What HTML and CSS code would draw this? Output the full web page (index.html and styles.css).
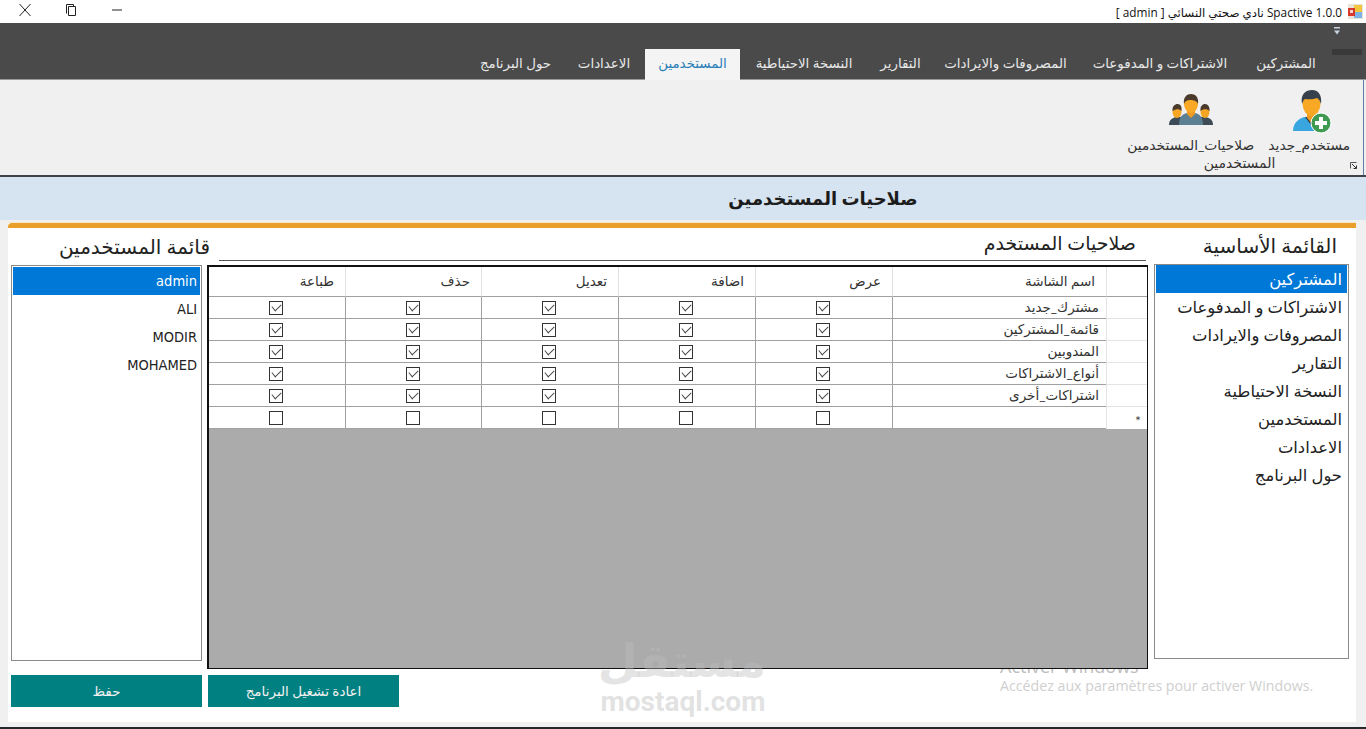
FILE: index.html
```html
<!DOCTYPE html>
<html lang="ar" dir="rtl">
<head>
<meta charset="utf-8">
<title>Spactive 1.0.0</title>
<link rel="stylesheet" href="styles.css">
</head>
<body>
<div class="app">
  <header class="titlebar">
    <div class="title-group">
      <svg class="app-icon" width="15" height="15" viewBox="0 0 15 15"><rect x="0" y="0" width="15" height="15" fill="#e8e4d8"/><rect x="6" y="1" width="8" height="7" fill="#f2c63c"/><rect x="6" y="8" width="8" height="6" fill="#7fb2e5"/><rect x="0" y="4" width="7" height="8" fill="#d8382c"/><rect x="2" y="6" width="3" height="3" fill="#f6d5cf"/></svg>
      <span class="title-text">Spactive 1.0.0 نادي صحتي النسائي [ admin ]</span>
    </div>
    <div class="win-controls" dir="ltr">
      <span class="win-btn"><svg width="14" height="14" viewBox="0 0 14 14"><path d="M1.5 1 L12.5 13 M12.5 1 L1.5 13" stroke="#222" stroke-width="1" fill="none"/></svg></span>
      <span class="win-btn"><svg width="10" height="12" viewBox="0 0 10 12"><path d="M2.5 2.5H9.5V11.5H2.5Z M0.5 9.5V0.5H7.5V2.5" stroke="#222" stroke-width="1" fill="none"/></svg></span>
      <span class="win-btn"><svg width="10" height="2" viewBox="0 0 10 2"><path d="M0 1H10" stroke="#222" stroke-width="1"/></svg></span>
    </div>
  </header>

  <nav class="tabbar">
    <span class="qat-arrow"><svg width="6" height="8" viewBox="0 0 6 8"><path d="M0 0H6V1.5H0Z M0 3.5H6L3 7.5Z" fill="#c9d3e0"/></svg></span>
    <span class="qat-block"></span>
    <div class="tabs">
      <span class="tab">المشتركين</span>
      <span class="tab">الاشتراكات و المدفوعات</span>
      <span class="tab">المصروفات والايرادات</span>
      <span class="tab">التقارير</span>
      <span class="tab">النسخة الاحتياطية</span>
      <span class="tab tab-active">المستخدمين</span>
      <span class="tab">الاعدادات</span>
      <span class="tab">حول البرنامج</span>
    </div>
  </nav>

  <section class="ribbon">
    <div class="ribbon-group">
      <div class="ribbon-items">
        <div class="ribbon-item item-new">
          <svg class="ribbon-icon" width="42" height="44" viewBox="0 0 42 44">
            <path d="M1 41 C1 33 7 28 13 27 L26 27 C30 28 33 32 34 41 Z" fill="#3aa6e0"/>
            <path d="M13 27 L19 35 L26 27 Z" fill="#2a3f4f"/>
            <path d="M15 20 H24 V28 L19.500 33 L15 28 Z" fill="#ef9a22"/>
            <ellipse cx="19.500" cy="14" rx="9" ry="11.500" fill="#f9a825"/>
            <path d="M10 14 C8 4 14 0 20 0 C27 0 30 6 29 14 C28 11 27 9 25 8 C20 10 15 9 13 9 C11 10 11 12 10 14 Z" fill="#37414b"/>
            <circle cx="29" cy="33" r="10" fill="#3f9a52" stroke="#fff" stroke-width="1"/>
            <path d="M27 27 H31 V31 H35 V35 H31 V39 H27 V35 H23 V31 H27 Z" fill="#fff"/>
          </svg>
          <span class="ribbon-label">مستخدم_جديد</span>
        </div>
        <div class="ribbon-item item-perm">
          <svg class="ribbon-icon" width="44" height="32" viewBox="0 0 44 32">
            <path d="M0 31 C0 26 3 24 7 23 L14 23 L16 31 Z" fill="#3d4c57"/>
            <path d="M44 31 C44 26 41 24 37 23 L30 23 L28 31 Z" fill="#3d4c57"/>
            <ellipse cx="8" cy="18" rx="4.500" ry="6" fill="#f5a623"/>
            <path d="M3.500 17 C3 12 6 10 8.500 10 C12 10 13 13 12.500 17 C10 14.500 7 15 3.500 17 Z" fill="#4a3a2c"/>
            <ellipse cx="36" cy="18" rx="4.500" ry="6" fill="#f5a623"/>
            <path d="M31.500 17 C31 12 33.500 10 36 10 C39 10 41 13 40.500 17 C38 14.500 34 15 31.500 17 Z" fill="#4a3a2c"/>
            <path d="M10 31 C10 23 13 20 18 19 H26 C31 20 34 23 34 31 Z" fill="#5d7f92"/>
            <path d="M18 15 H26 V20 L22 24 L18 20 Z" fill="#ef9a22"/>
            <ellipse cx="22" cy="10" rx="7" ry="9" fill="#f9a825"/>
            <path d="M15 10 C14 3 18 0 22 0 C27 0 30 4 29 10 C28 7 25 6 21 6 C18 6 16 7 15 10 Z" fill="#4a3a2c"/>
          </svg>
          <span class="ribbon-label">صلاحيات_المستخدمين</span>
        </div>
      </div>
      <div class="ribbon-group-name">المستخدمين</div>
      <span class="launcher"><svg width="7" height="7" viewBox="0 0 7 7"><path d="M0.5 6.5V0.5H6.5" stroke="#555" fill="none"/><path d="M2 2L6.5 6.5M6.5 3.5V6.5H3.5" stroke="#333" fill="none"/></svg></span>
    </div>
  </section>

  <div class="page-heading">صلاحيات المستخدمين</div>

  <div class="content">
    <main class="card">
      <div class="card-grid">
        <h2 class="col-title title-main">القائمة الأساسية</h2>
        <h2 class="col-title title-perm">صلاحيات المستخدم</h2>
        <h2 class="col-title title-users">قائمة المستخدمين</h2>

        <ul class="listbox list-main">
          <li class="selected">المشتركين</li>
          <li>الاشتراكات و المدفوعات</li>
          <li>المصروفات والايرادات</li>
          <li>التقارير</li>
          <li>النسخة الاحتياطية</li>
          <li>المستخدمين</li>
          <li>الاعدادات</li>
          <li>حول البرنامج</li>
        </ul>

        <div class="datagrid">
          <div class="dg-row dg-head">
            <div class="dg-rowhead"></div>
            <div class="dg-name">اسم الشاشة</div>
            <div class="dg-h">عرض</div>
            <div class="dg-h">اضافة</div>
            <div class="dg-h">تعديل</div>
            <div class="dg-h">حذف</div>
            <div class="dg-h dg-last">طباعة</div>
          </div>
          <div class="dg-row">
            <div class="dg-rowhead"></div><div class="dg-name">مشترك_جديد</div>
            <div class="dg-c"><i class="cb on"></i></div><div class="dg-c"><i class="cb on"></i></div><div class="dg-c"><i class="cb on"></i></div><div class="dg-c"><i class="cb on"></i></div><div class="dg-c dg-last"><i class="cb on"></i></div>
          </div>
          <div class="dg-row">
            <div class="dg-rowhead"></div><div class="dg-name">قائمة_المشتركين</div>
            <div class="dg-c"><i class="cb on"></i></div><div class="dg-c"><i class="cb on"></i></div><div class="dg-c"><i class="cb on"></i></div><div class="dg-c"><i class="cb on"></i></div><div class="dg-c dg-last"><i class="cb on"></i></div>
          </div>
          <div class="dg-row">
            <div class="dg-rowhead"></div><div class="dg-name">المندوبين</div>
            <div class="dg-c"><i class="cb on"></i></div><div class="dg-c"><i class="cb on"></i></div><div class="dg-c"><i class="cb on"></i></div><div class="dg-c"><i class="cb on"></i></div><div class="dg-c dg-last"><i class="cb on"></i></div>
          </div>
          <div class="dg-row">
            <div class="dg-rowhead"></div><div class="dg-name">أنواع_الاشتراكات</div>
            <div class="dg-c"><i class="cb on"></i></div><div class="dg-c"><i class="cb on"></i></div><div class="dg-c"><i class="cb on"></i></div><div class="dg-c"><i class="cb on"></i></div><div class="dg-c dg-last"><i class="cb on"></i></div>
          </div>
          <div class="dg-row">
            <div class="dg-rowhead"></div><div class="dg-name">اشتراكات_أخرى</div>
            <div class="dg-c"><i class="cb on"></i></div><div class="dg-c"><i class="cb on"></i></div><div class="dg-c"><i class="cb on"></i></div><div class="dg-c"><i class="cb on"></i></div><div class="dg-c dg-last"><i class="cb on"></i></div>
          </div>
          <div class="dg-row">
            <div class="dg-rowhead dg-star">*</div><div class="dg-name"></div>
            <div class="dg-c"><i class="cb"></i></div><div class="dg-c"><i class="cb"></i></div><div class="dg-c"><i class="cb"></i></div><div class="dg-c"><i class="cb"></i></div><div class="dg-c dg-last"><i class="cb"></i></div>
          </div>
        </div>

        <ul class="listbox list-users">
          <li class="selected">admin</li>
          <li>ALI</li>
          <li>MODIR</li>
          <li>MOHAMED</li>
        </ul>

        <div class="btn-slot slot-restart"><button class="btn">اعادة تشغيل البرنامج</button></div>
        <div class="btn-slot slot-save"><button class="btn">حفظ</button></div>
      </div>
    </main>
  </div>
  <div class="bottom-line"></div>
</div>

<div class="activate" dir="ltr">
  <div class="activate-title">Activer Windows</div>
  <div class="activate-text">Accédez aux paramètres pour activer Windows.</div>
</div>
<div class="watermark">
  <div class="wm-ar">مستقل</div>
  <div class="wm-en" dir="ltr">mostaql.com</div>
</div>
</body>
</html>
```
FILE: styles.css
```css
* { box-sizing: border-box; }
html, body { margin: 0; padding: 0; }
body {
  width: 1366px;
  height: 729px;
  overflow: hidden;
  position: relative;
  background: #f0f0f0;
  font-family: Lato, "DejaVu Sans", sans-serif;
  color: #222;
}
.app { display: flex; flex-direction: column; height: 729px; }

/* title bar */
.titlebar {
  height: 23px;
  flex: none;
  background: #fff;
  display: flex;
  justify-content: space-between;
  align-items: center;
  padding-right: 3px;
}
.title-group { display: flex; align-items: center; gap: 6px; }
.title-text { font: 11.800px "Open Sans", "DejaVu Sans", sans-serif; color: #111; }
.win-controls { display: flex; padding-left: 2px; margin-top: -3px; }
.win-btn { width: 46px; display: flex; justify-content: center; align-items: center; height: 14px; }

/* tabs */
.tabbar {
  height: 57px;
  flex: none;
  background: #4a4a4a;
  border-bottom: 1px solid #9a9a9a;
  position: relative;
  display: flex;
  align-items: flex-end;
  padding-right: 36px;
}
.qat-arrow { position: absolute; top: 4px; left: 1334px; line-height: 0; }
.qat-block { position: absolute; top: 26px; left: 1332px; width: 30px; height: 6px; background: #393939; }
.tabs {
  display: grid;
  grid-template-columns: 88px 164px 145px 65px 128px 95px 82px 95px;
  height: 31px;
  margin-bottom: -1px;
}
.tab {
  display: flex;
  align-items: center;
  justify-content: center;
  font-size: 13.400px;
  color: #e8e8e8;
  white-space: nowrap;
  padding-bottom: 4px;
}
.tab-active { background: #f4f4f4; color: #2a7fb8; }

/* ribbon */
.ribbon {
  height: 97px;
  flex: none;
  background: #f0f0f0;
  padding-right: 2px;
  border-bottom: 2px solid #3f4347;
  display: flex;
}
.ribbon-group {
  width: 242px;
  position: relative;
  border-right: 1px solid #5f7fa0;
  display: flex;
  flex-direction: column;
}
.ribbon-items { display: flex; height: 75px; }
.ribbon-item { display: flex; flex-direction: column; align-items: center; position: relative; }
.item-new { width: 108px; padding-top: 10px; margin-left: -4px; }
.item-new .ribbon-icon { margin-right: -8px; }
.item-perm { width: 138px; padding-top: 14px; }
.ribbon-icon { display: block; flex: none; }
.ribbon-label { font-size: 13.800px; line-height: 18px; color: #333; white-space: nowrap; position: absolute; top: 56px; }
.ribbon-group-name { font-size: 14px; line-height: 16px; color: #333; text-align: center; padding-right: 6px; }
.launcher { position: absolute; left: 228px; top: 82px; line-height: 0; }

/* heading */
.page-heading {
  height: 43px;
  flex: none;
  background: #d6e4f1;
  font-size: 18px;
  font-weight: 700;
  color: #1c1c1c;
  display: flex;
  align-items: center;
  justify-content: center;
  padding-left: 280px;
  padding-bottom: 2px;
}

/* card */
.content { flex: 1; padding: 2px 10px 5px 8px; min-height: 0; display: flex; }
.card {
  flex: 1;
  background: #fff;
  border-top: 1px solid #f6e7c6;
  display: flex;
  flex-direction: column;
}
.card::before {
  content: "";
  display: block;
  height: 5px;
  background: #e99f2a;
  border-top-left-radius: 4px;
  flex: none;
}
.card-grid {
  display: grid;
  grid-template-columns: 196px 941px 191px;
  column-gap: 5px;
  grid-template-rows: 37px 404px 38px;
  padding-right: 7px;
  padding-left: 3px;
}
.col-title {
  margin: 0;
  font-size: 20px;
  line-height: 26px;
  font-weight: 400;
  color: #222;
  white-space: nowrap;
}
.title-main { grid-column: 1; grid-row: 1; padding-right: 12px; padding-top: 4px; }
.title-perm {
  grid-column: 2;
  grid-row: 1;
  font-size: 19px;
  height: 33px;
  border-bottom: 1px solid #555;
  margin-left: 12px;
  margin-right: 2px;
  padding-right: 10px;
  padding-top: 2px;
}
.title-users { grid-column: 3; grid-row: 1; margin-right: -8px; padding-top: 5px; }

/* list boxes */
.listbox {
  list-style: none;
  margin: 0;
  padding: 1px;
  background: #fff;
  border: 1px solid #8a8a8a;
  font-size: 16.400px;
  color: #222;
}
.listbox li { height: 28px; line-height: 28px; padding-right: 3px; white-space: nowrap; }
.listbox .selected { background: #0078d7; color: #fff; }
.list-main { grid-column: 1; grid-row: 2; width: 195px; height: 395px; margin-top: -1px; padding-top: 0; }
.list-main li { padding-right: 5px; }
.list-users {
  grid-column: 3;
  grid-row: 2;
  height: 396px;
  font-family: "DejaVu Sans", sans-serif;
  font-stretch: condensed;
  font-size: 14.500px;
}

/* data grid */
.datagrid {
  grid-column: 2;
  grid-row: 2;
  height: 404px;
  background: #ababab;
  border: solid #111;
  border-width: 2px 1px 1px 2px;
  font-size: 13.500px;
  color: #333;
}
.dg-row {
  display: grid;
  grid-template-columns: 41px 214px 137px 137px 137px 136px 136px;
  height: 22px;
  background: #fff;
}
.dg-head { height: 30px; }
.dg-row > div {
  border-left: 1px solid #a0a0a0;
  border-bottom: 1px solid #a0a0a0;
}
.dg-row > .dg-last { border-left: 0; }
.dg-row > .dg-rowhead { border-left: 1px solid #e4e4e4; border-bottom: 1px solid #e4e4e4; }
.dg-head > div { border-left-color: #e2e2e2; }
.dg-head > .dg-rowhead { border-bottom-color: #a0a0a0; }
.dg-name { padding-right: 7px; line-height: 21px; white-space: nowrap; overflow: hidden; }
.dg-head .dg-name, .dg-h { padding-right: 11px; line-height: 29px; }
.dg-row > .dg-star { font-size: 14px; color: #444; line-height: 28px; height: 22px; overflow: hidden; padding-right: 6px; border-bottom-color: transparent; }
.dg-c { display: flex; align-items: center; justify-content: center; padding-right: 2px; }
.cb {
  display: block;
  width: 14px;
  height: 14px;
  border: 1px solid #333;
  background: #fff;
  position: relative;
}
.cb.on::after {
  content: "";
  position: absolute;
  left: 2px;
  top: 1px;
  width: 8px;
  height: 5px;
  border-left: 1px solid #444;
  border-bottom: 1px solid #444;
  transform: rotate(-45deg) skewX(-6deg);
}

/* buttons */
.btn-slot { grid-row: 3; padding-top: 6px; height: 38px; display: flex; }
.slot-restart { grid-column: 2; justify-content: flex-end; padding-left: 1px; }
.slot-save { grid-column: 3; }
.btn {
  width: 191px;
  height: 32px;
  background: #008080;
  color: #f2f2f2;
  border: 0;
  padding: 0;
  font: 13.500px Lato, "DejaVu Sans", sans-serif;
}
.bottom-line { height: 2px; background: #23282d; flex: none; }

/* overlays */
.activate {
  position: absolute;
  left: 1000px;
  top: 654px;
  color: #cfcfcf;
  font-family: "Open Sans", sans-serif;
  clip-path: inset(15px 0 0 0);
}
.activate-title { font-size: 18px; line-height: 24px; color: #bdbdbd; }
.activate-text { font-size: 14.200px; line-height: 18px; margin-top: -1px; white-space: nowrap; }
.watermark {
  position: absolute;
  left: 600px;
  top: 634px;
  width: 166px;
  text-align: center;
  pointer-events: none;
}
.wm-ar { font-size: 46px; line-height: 54px; height: 54px; font-weight: 700; font-family: "DejaVu Sans", sans-serif; color: rgba(190, 190, 190, .42); white-space: nowrap; }
.wm-en { font: 700 28px/27px Roboto, sans-serif; color: rgba(190, 190, 190, .45); }
```
